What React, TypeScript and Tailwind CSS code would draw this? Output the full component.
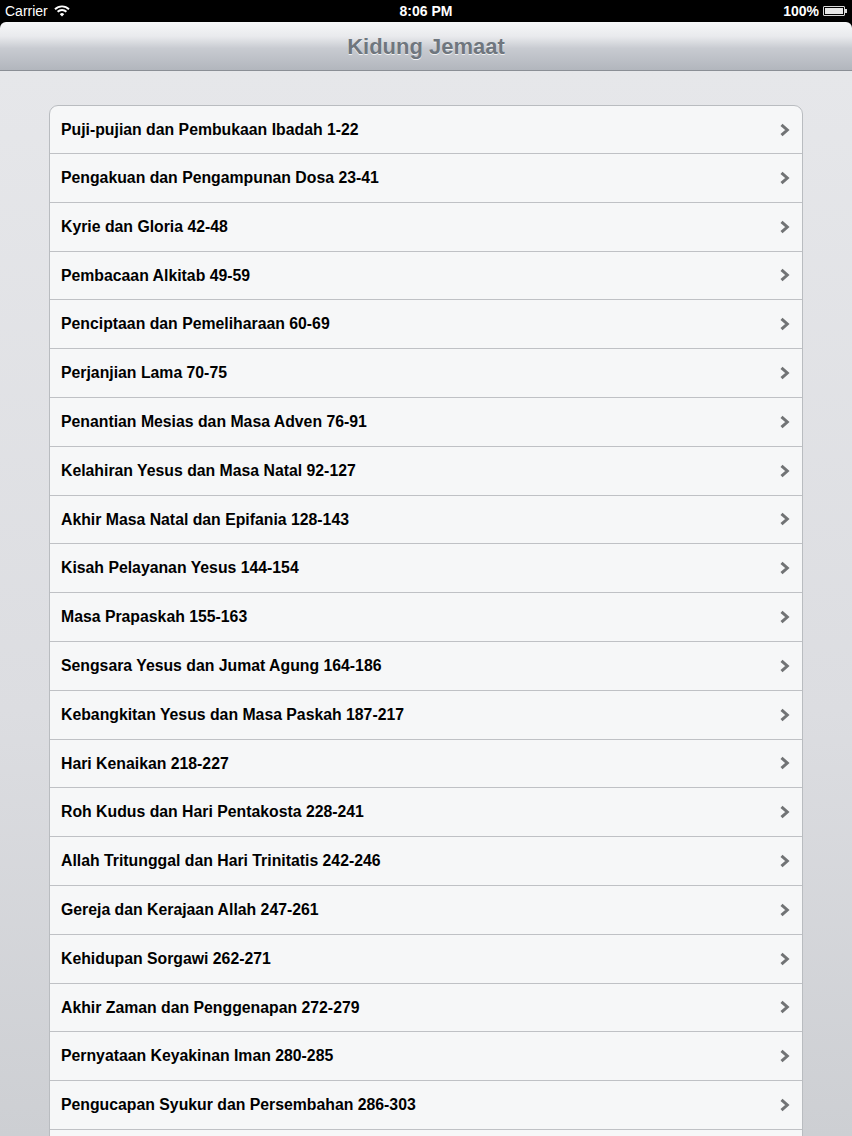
import React from "react";

const items = [
  "Puji-pujian dan Pembukaan Ibadah 1-22",
  "Pengakuan dan Pengampunan Dosa 23-41",
  "Kyrie dan Gloria 42-48",
  "Pembacaan Alkitab 49-59",
  "Penciptaan dan Pemeliharaan 60-69",
  "Perjanjian Lama 70-75",
  "Penantian Mesias dan Masa Adven 76-91",
  "Kelahiran Yesus dan Masa Natal 92-127",
  "Akhir Masa Natal dan Epifania 128-143",
  "Kisah Pelayanan Yesus 144-154",
  "Masa Prapaskah 155-163",
  "Sengsara Yesus dan Jumat Agung 164-186",
  "Kebangkitan Yesus dan Masa Paskah 187-217",
  "Hari Kenaikan 218-227",
  "Roh Kudus dan Hari Pentakosta 228-241",
  "Allah Tritunggal dan Hari Trinitatis 242-246",
  "Gereja dan Kerajaan Allah 247-261",
  "Kehidupan Sorgawi 262-271",
  "Akhir Zaman dan Penggenapan 272-279",
  "Pernyataan Keyakinan Iman 280-285",
  "Pengucapan Syukur dan Persembahan 286-303",
  "Pengutusan dan Berkat 304-310",
];

function Chevron() {
  return (
    <svg width="12" height="14" viewBox="0 0 12 14" className="shrink-0">
      <path d="M2.5 1.8 L8.3 7 L2.5 12.2" fill="none" stroke="#717375" strokeWidth="3" strokeLinecap="butt" strokeLinejoin="miter" />
    </svg>
  );
}

export default function App() {
  return (
    <div
      className="w-[852px] h-[1136px] overflow-hidden bg-black relative"
      style={{ fontFamily: '"Liberation Sans", Arial, sans-serif' }}
    >
      {/* status bar */}
      <div className="h-[22px] flex items-center justify-between px-[5px] text-white text-[14px] relative">
        <div className="flex items-center gap-[6px]">
          <span>Carrier</span>
          <svg width="16" height="12" viewBox="0 0 16 12">
            <path d="M1 4.2 A10 10 0 0 1 15 4.2" fill="none" stroke="white" strokeWidth="1.9" />
            <path d="M3.6 6.8 A6.3 6.3 0 0 1 12.4 6.8" fill="none" stroke="white" strokeWidth="1.9" />
            <path d="M8 11.5 L5.8 9.2 A3.1 3.1 0 0 1 10.2 9.2 Z" fill="white" />
          </svg>
        </div>
        <span className="absolute left-1/2 -translate-x-1/2 font-bold text-[14px]">8:06 PM</span>
        <div className="flex items-center gap-[4px] font-bold">
          <span>100%</span>
          <div className="flex items-center">
            <div className="w-[22px] h-[10px] border border-[#d8d8d8] rounded-[1px] p-[1px]">
              <div className="w-full h-full bg-[#e6e6e6]" />
            </div>
            <div className="w-[2px] h-[4px] bg-[#d8d8d8]" />
          </div>
        </div>
      </div>
      {/* nav bar */}
      <div className="h-[49px] rounded-t-[6px] bg-[linear-gradient(to_bottom,#f6f7f8_0%,#e9eaed_30%,#c8cbd1_55%,#b2b6bd_100%)] border-b border-[#8b8f96] flex items-center justify-center">
        <span className="text-[22px] font-bold text-[#6f767e] [text-shadow:0_1px_0_rgba(255,255,255,0.8)]">
          Kidung Jemaat
        </span>
      </div>
      {/* content */}
      <div className="h-[1065px] bg-[linear-gradient(to_bottom,#e6e7ea_0%,#dcdde1_60%,#cdcfd3_100%)] pt-[34px] px-[49px]">
        <div className="w-[754px] bg-[#f6f7f8] border border-[#b9bcc0] rounded-t-[9px] overflow-hidden">
          {items.map((t, i) => (
            <div
              key={i}
              className={`flex items-center justify-between pl-[11px] pr-[11px] ${i > 0 ? "h-[48.8px] border-t border-[#bfc1c5]" : "h-[47px]"}`}
            >
              <span className="text-[15.8px] font-bold text-black">{t}</span>
              <Chevron />
            </div>
          ))}
        </div>
      </div>
    </div>
  );
}
